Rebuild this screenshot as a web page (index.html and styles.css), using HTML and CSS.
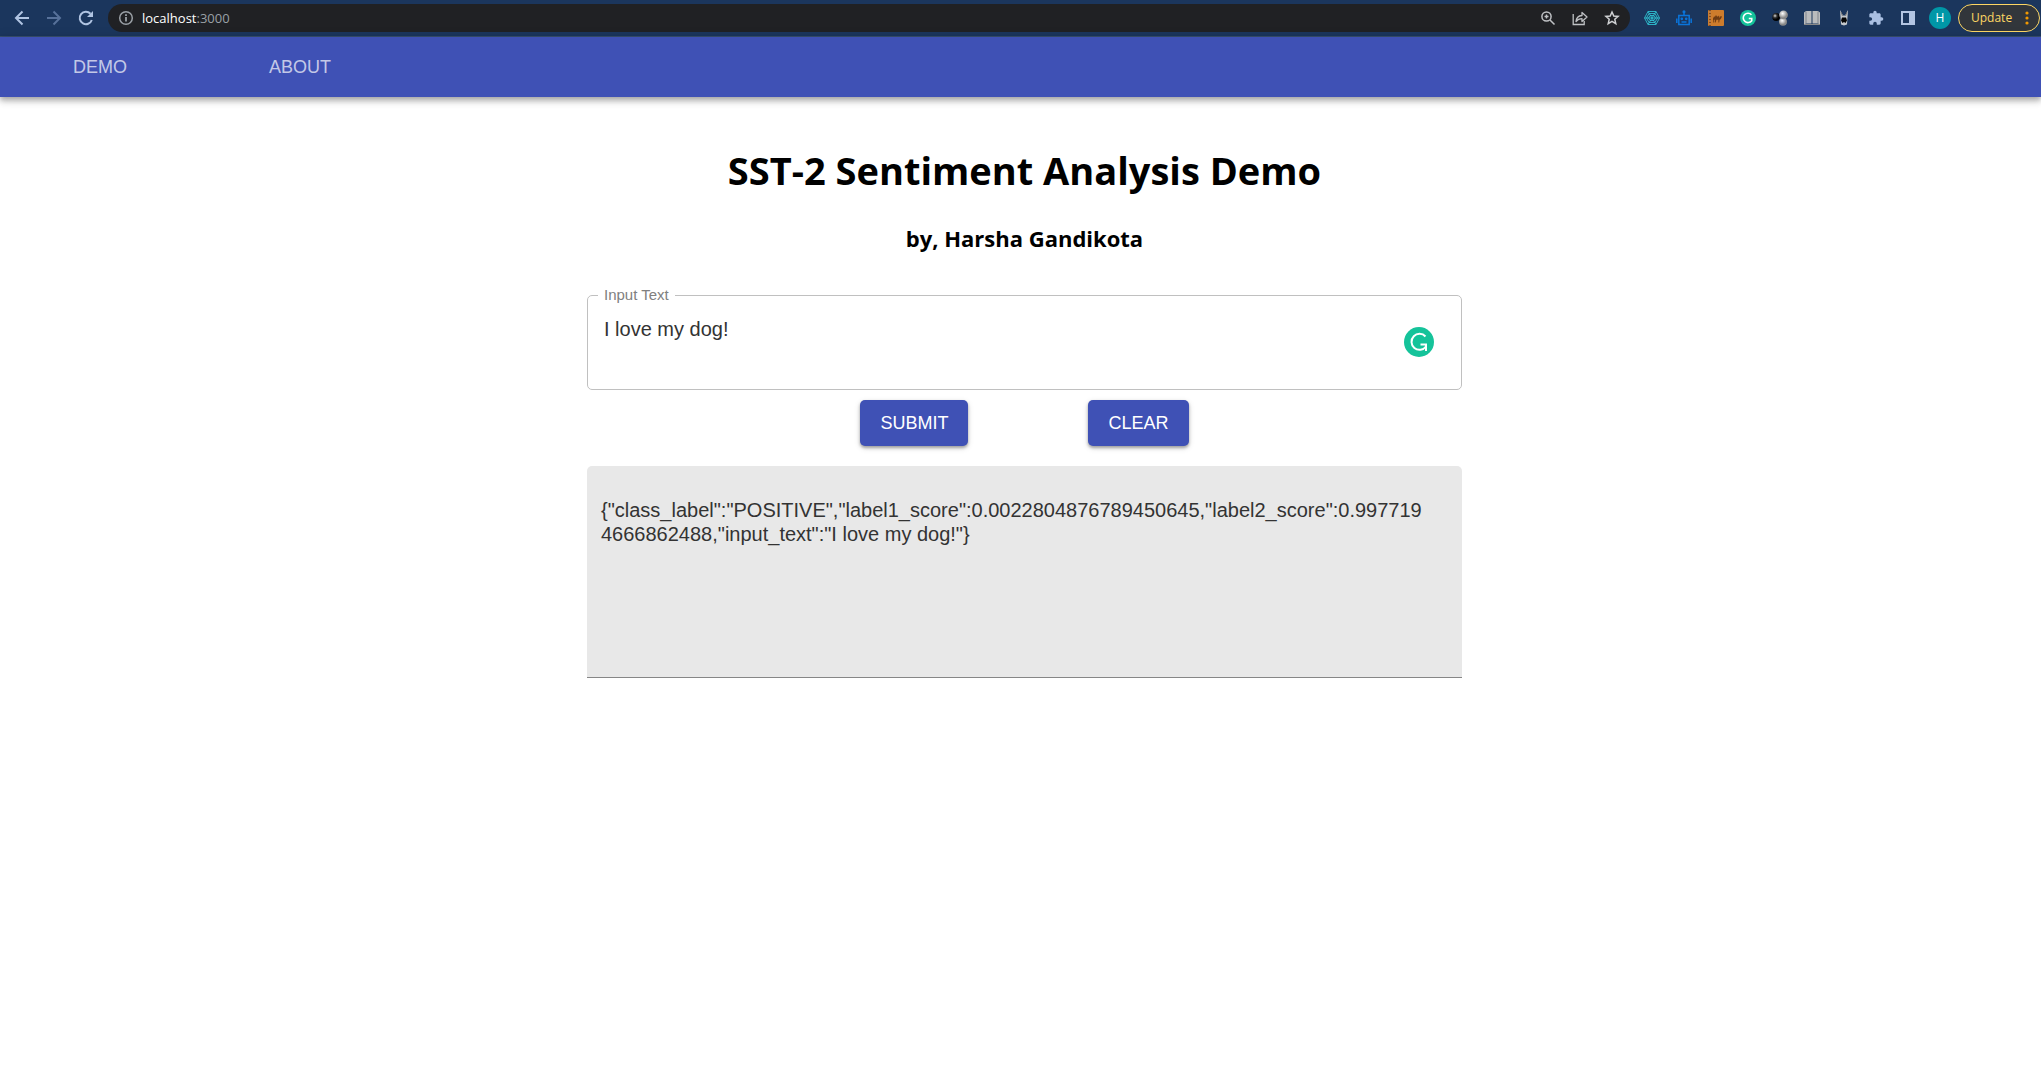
FILE: index.html
```html
<!DOCTYPE html>
<html lang="en">
<head>
<meta charset="utf-8">
<title>SST-2 Sentiment Analysis Demo</title>
<link rel="stylesheet" href="styles.css">
</head>
<body>
<header class="toolbar">
  <button class="tool" aria-label="Back"><svg width="16" height="16" viewBox="0 0 16 16" fill="none" stroke="#b0c4e2" stroke-width="2"><path d="M15 8H3M8.500 1.500 2 8l6.500 6.500"/></svg></button>
  <button class="tool" aria-label="Forward"><svg width="16" height="16" viewBox="0 0 16 16" fill="none" stroke="#57719a" stroke-width="2"><path d="M1 8h12M7.500 1.500 14 8l-6.500 6.500"/></svg></button>
  <button class="tool" aria-label="Reload"><svg width="16" height="16" viewBox="0 0 16 16" fill="none" stroke="#b0c4e2" stroke-width="2"><path d="M13.800 10A6.200 6.200 0 1 1 12.500 3.800"/><path d="M15 1v6H9z" fill="#b0c4e2" stroke="none"/></svg></button>
  <div class="address">
    <svg width="16" height="16" viewBox="0 0 16 16" fill="none" stroke="#9aa0a6" stroke-width="1.500"><circle cx="8" cy="8" r="6.300"/><path d="M8 7v4.500M8 4.300v1.700" stroke-width="1.800"/></svg>
    <span class="url">localhost<span class="port">:3000</span></span>
    <button class="tool" aria-label="Zoom"><svg width="16" height="16" viewBox="0 0 16 16" fill="none" stroke="#bfc1c4" stroke-width="1.500"><circle cx="6.500" cy="6.500" r="4.600"/><path d="m10 10 4.500 4.500M4.500 6.500h4M6.500 4.500v4"/></svg></button>
    <button class="tool" aria-label="Share"><svg width="16" height="16" viewBox="0 0 16 16" fill="none" stroke="#bfc1c4" stroke-width="1.300"><path d="M1.200 4v10.500h11V11"/><path d="M4 11.500c.3-4 2.500-5.700 6-6V2.500L15 7l-5 4.500V8.700c-2.700 0-4.500.8-6 2.800z" stroke-linejoin="round"/></svg></button>
    <button class="tool" aria-label="Bookmark"><svg width="16" height="16" viewBox="0 0 16 16" fill="none" stroke="#cfd1d3" stroke-width="1.500"><path d="m8 2 1.800 4 4.300.4-3.300 2.900 1 4.300L8 11.300l-3.800 2.300 1-4.300L1.900 6.400 6.200 6z"/></svg></button>
  </div>
  <div class="extensions">
    <button class="tool" aria-label="Web"><svg width="16" height="16" viewBox="0 0 16 16" fill="none" stroke="#2fc0d0" stroke-width=".9"><path d="M4 1.500h8L15.500 8 12 14.500H4L.5 8zM5 3.500h6L13.500 8 11 12.500H5L2.500 8zM6 5.500h4L11.500 8 10 10.500H6L4.500 8z"/><path d="M.5 8h15M4 1.500l8 13M12 1.500l-8 13"/></svg></button>
    <button class="tool" aria-label="Robot"><svg width="16" height="16" viewBox="0 0 16 16" fill="none" stroke="#0a74da" stroke-width="1.500"><path d="M2.800 5.500h10.400v9H2.800zM8 5V2.500M.8 8.500v4.500M15.200 8.500v4.500M5.500 12h5"/><circle cx="8" cy="1.800" r=".8"/><circle cx="5.800" cy="8.800" r=".6"/><circle cx="10.200" cy="8.800" r=".6"/></svg></button>
    <button class="tool" aria-label="Camel notebook"><svg width="16" height="16" viewBox="0 0 16 16"><rect width="16" height="16" rx="1" fill="#ce7c2c"/><path d="M1 0h2v16H1z" fill="#8b4c18"/><path d="M1 2h2M1 5h2M1 8h2M1 11h2M1 14h2" stroke="#e4ac70"/><path d="M5 8.500 6 6.500l1 .3L8 5l1 1.500h1l1-1 .6 2.500 1-2 1.200.3-.2 1.200-1 1.700-1 .6-.4 2.700h-.8V9.700l-2 .1-.8 2.700h-.9l.2-3-1.200.7v2.300h-.7z" fill="#703c13"/></svg></button>
    <button class="tool" aria-label="Grammarly"><svg width="16" height="16" viewBox="0 0 30 30"><circle cx="15" cy="15" r="15" fill="#15c39a"/><path d="M21.500 9A8.800 8.800 0 1 0 22 20v-4h-5.500" fill="none" stroke="#fff" stroke-width="3"/></svg></button>
    <button class="tool" aria-label="Spheres"><svg width="16" height="16" viewBox="0 0 16 16"><defs><radialGradient id="dark" cx=".35" cy=".35"><stop stop-color="#ddd"/><stop offset=".5" stop-color="#333"/><stop offset="1" stop-color="#000"/></radialGradient><radialGradient id="light" cx=".4" cy=".35"><stop stop-color="#fff"/><stop offset="1" stop-color="#888"/></radialGradient></defs><circle cx="11" cy="11.800" r="4" fill="url(#light)"/><circle cx="4.200" cy="7" r="3.900" fill="url(#dark)"/><circle cx="11.500" cy="4.800" r="4.400" fill="url(#light)"/></svg></button>
    <button class="tool" aria-label="Reader"><svg width="16" height="16" viewBox="0 0 16 16"><path d="M0 2.500 2 1h5.500v12.500H2L0 14.500zM16 2.500 14 1H8.500v12.500H14l2 1z" fill="#b9bbbd"/><path d="M2 1.500v12M14 1.500v12" stroke="#68707a" stroke-width=".7"/><path d="M0 14.500h16" stroke="#888"/></svg></button>
    <button class="tool" aria-label="Badger"><svg width="16" height="16" viewBox="0 0 16 16"><path d="M4 0 7 5.500h2L12 0l-.5 7-.5 7.500-3 1-3-1L4.500 7z" fill="#c4c8cc"/><path d="m5 2 1.500 4M11 2 9.500 6" stroke="#666" stroke-width=".8"/><path d="M6 7.500h4l1 3-1.500 2.500L8 12l-1.500 1L5 10.500z" fill="#050505"/></svg></button>
    <button class="tool" aria-label="Extensions"><svg width="16" height="16" viewBox="0 0 24 24" fill="#a9bfe2"><path d="M20.500 11H19V7c0-1.100-.9-2-2-2h-4V3.500a2.500 2.500 0 0 0-5 0V5H4c-1.100 0-2 .9-2 2v3.800h1.500a2.700 2.700 0 0 1 0 5.400H2V20c0 1.100.9 2 2 2h3.800v-1.500a2.700 2.700 0 0 1 5.400 0V22H17c1.100 0 2-.9 2-2v-4h1.500a2.500 2.500 0 0 0 0-5z"/></svg></button>
    <button class="tool" aria-label="Side panel"><svg width="16" height="16" viewBox="0 0 16 16"><path d="M2 2h12v12H2z" fill="none" stroke="#b3c5e3" stroke-width="2"/><path d="M9 2h5v12H9z" fill="#b3c5e3"/></svg></button>
    <button class="tool" aria-label="Profile"><span class="avatar">H</span></button>
  </div>
  <button class="update">Update <svg width="4" height="14" viewBox="0 0 4 14" fill="#f29900"><circle cx="2" cy="2" r="1.600"/><circle cx="2" cy="7" r="1.600"/><circle cx="2" cy="12" r="1.600"/></svg></button>
</header>
<nav class="tabs">
  <a class="tab" href="#demo">DEMO</a>
  <a class="tab" href="#about">ABOUT</a>
</nav>
<main class="page">
  <h1 class="title">SST-2 Sentiment Analysis Demo</h1>
  <h2 class="author">by, Harsha Gandikota</h2>
  <form class="form">
    <fieldset class="field">
      <legend class="legend"><label for="input-text">Input Text</label></legend>
      <textarea class="input" id="input-text" spellcheck="false">I love my dog!</textarea>
      <svg class="checker" width="30" height="30" viewBox="0 0 30 30"><circle cx="15" cy="15" r="15" fill="#15c39a"/><path d="M21.500 9.500A8 8 0 1 0 22 19.500" fill="none" stroke="#fff" stroke-width="2"/><path d="M16.500 17.500H22V24" fill="none" stroke="#fff" stroke-width="2"/></svg>
    </fieldset>
    <div class="actions">
      <button class="button" type="button">SUBMIT</button>
      <button class="button" type="button">CLEAR</button>
    </div>
    <textarea class="output" aria-label="Result" readonly spellcheck="false">{"class_label":"POSITIVE","label1_score":0.0022804876789450645,"label2_score":0.9977194666862488,"input_text":"I love my dog!"}</textarea>
  </form>
</main>
</body>
</html>
```
FILE: styles.css
```css
* { box-sizing: border-box; }
body { margin: 0; background: #fff; color: #000; font-family: "Liberation Sans", Arial, sans-serif; }
button { border: 0; margin: 0; padding: 0; background: none; font: inherit; }

.toolbar { display: flex; align-items: center; height: 37px; padding: 0 1px 1px 6px; background: #1b365d; border-bottom: 1px solid #39516f; font-family: "Open Sans", sans-serif; }
.tool { display: flex; align-items: center; justify-content: center; flex: none; width: 32px; height: 28px; }
.address { display: flex; align-items: center; flex: 1; height: 28px; margin: 0 6px; padding: 0 2px 0 10px; border-radius: 14px; background: #202124; }
.url { flex: 1; margin-left: 8px; color: #fff; font-size: 13px; }
.port { color: #9aa0a6; }
.extensions { display: flex; }
.avatar { width: 22px; height: 22px; border-radius: 50%; background: #0097a7; color: #fff; font-size: 12px; line-height: 22px; }
.update { display: flex; align-items: center; justify-content: space-between; width: 82px; height: 28px; margin-left: 2px; padding: 0 10px 0 12px; border: 1px solid #fdd663; border-radius: 14px; background: #32363b; color: #fdd663; font-size: 12px; }

.tabs { display: flex; position: relative; height: 60px; background: #3f51b5; box-shadow: 0 2px 5px rgba(0, 0, 0, .2), 0 5px 6px rgba(0, 0, 0, .14), 0 1px 12px rgba(0, 0, 0, .12); }
.tab { width: 200px; color: rgba(255, 255, 255, .7); font-size: 18px; font-weight: 500; line-height: 60px; text-align: center; text-decoration: none; }

.page { display: flex; flex-direction: column; align-items: center; padding: 46px 0 0 8px; font-family: "Open Sans", sans-serif; }
.title { margin: 0; font-size: 38px; line-height: 54px; font-weight: 700; }
.author { margin: 25px 0 0; font-size: 22px; line-height: 32px; font-weight: 700; }
.form { width: 100%; max-width: 875px; margin-top: 32px; font-family: "Liberation Sans", Arial, sans-serif; }
.field { position: relative; margin: 0; padding: 13px 16px 24px 10px; border: 1px solid #c0c0c0; border-radius: 5px; }
.legend { padding: 0 6px; color: #808080; font-size: 15px; line-height: 18px; }
.input { display: block; width: 100%; height: 48px; padding: 0 6px; border: 0; background: none; resize: none; outline: none; color: #333; font: 20px/24px "Liberation Sans", Arial, sans-serif; }
.checker { position: absolute; right: 27px; bottom: 32px; }
.actions { display: flex; justify-content: center; gap: 120px; margin: 10px 0 20px; }
.button { height: 46px; padding: 0 20px; border-radius: 5px; background: #3f51b5; color: #fff; font-size: 18px; box-shadow: 0 2px 3px rgba(0, 0, 0, .3), 0 2px 6px rgba(0, 0, 0, .14); }
.output { display: block; width: 100%; height: 212px; padding: 32px 32px 12px 14px; border: 0; border-bottom: 1px solid #868686; border-radius: 5px 5px 0 0; background: #e8e8e8; resize: none; outline: none; color: #333; font: 20px/24px "Liberation Sans", Arial, sans-serif; word-break: break-all; }
```
